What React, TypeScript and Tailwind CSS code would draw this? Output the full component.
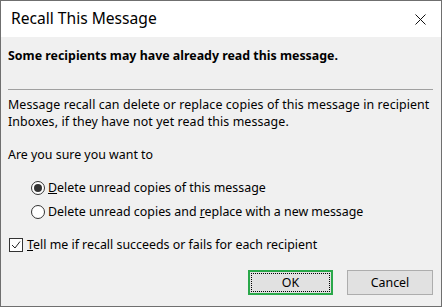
import React from 'react';

export default function App() {
  return (
    <div className="w-[442px] h-[307px] border border-[#6f6f6f] bg-[#f0f0f0] flex flex-col text-black font-['Noto_Sans',sans-serif] overflow-hidden">
      {/* title bar */}
      <div className="h-[36px] bg-white flex items-center justify-between pl-[10px] pr-[14px] shrink-0">
        <span className="text-[15.6px] leading-none">Recall This Message</span>
        <svg width="11" height="11" viewBox="0 0 11 11" className="mr-[1px]">
          <path d="M0.5 0.5 L10.5 10.5 M10.5 0.5 L0.5 10.5" stroke="#111" strokeWidth="1" />
        </svg>
      </div>

      <div className="flex flex-col px-[7px] text-[12.4px] leading-[17px]">
        <p className="font-bold mt-[10px]">Some recipients may have already read this message.</p>
        <div className="h-px bg-[#a0a0a0] mt-[25px] mr-[1px]" />
        <p className="mt-[6px] tracking-[0.1px]">
          Message recall can delete or replace copies of this message in recipient
          <br />
          Inboxes, if they have not yet read this message.
        </p>
        <p className="mt-[16px]">Are you sure you want to</p>

        <div className="flex flex-col gap-[7px] mt-[16px] pl-[23px]">
          <label className="flex items-center gap-[3px]">
            <span className="w-[14px] h-[14px] rounded-full border border-[#333] flex items-center justify-center bg-white">
              <span className="w-[8px] h-[8px] rounded-full bg-[#333]" />
            </span>
            <span><span className="underline">D</span>elete unread copies of this message</span>
          </label>
          <label className="flex items-center gap-[3px]">
            <span className="w-[14px] h-[14px] rounded-full border border-[#333] bg-white" />
            <span>Delete unread copies and <span className="underline">r</span>eplace with a new message</span>
          </label>
        </div>

        <label className="flex items-center gap-[4px] mt-[16px] pl-[1px]">
          <span className="w-[14px] h-[14px] border border-[#333] bg-white flex items-center justify-center">
            <svg width="10" height="10" viewBox="0 0 10 10">
              <path d="M1 5 L4 8 L9 1.5" fill="none" stroke="#222" strokeWidth="1" />
            </svg>
          </span>
          <span><span className="underline">T</span>ell me if recall succeeds or fails for each recipient</span>
        </label>

        <div className="flex justify-end gap-[14px] mt-[17px] pr-[1px]">
          <button className="w-[85px] h-[25px] bg-[#e1e1e1] border-2 border-[#2aa84a] flex items-center justify-center p-[1px]">
            <span className="w-full h-full border border-dotted border-black flex items-center justify-center">OK</span>
          </button>
          <button className="w-[86px] h-[25px] bg-[#e1e1e1] border border-[#adadad] flex items-center justify-center">
            Cancel
          </button>
        </div>
      </div>
    </div>
  );
}
